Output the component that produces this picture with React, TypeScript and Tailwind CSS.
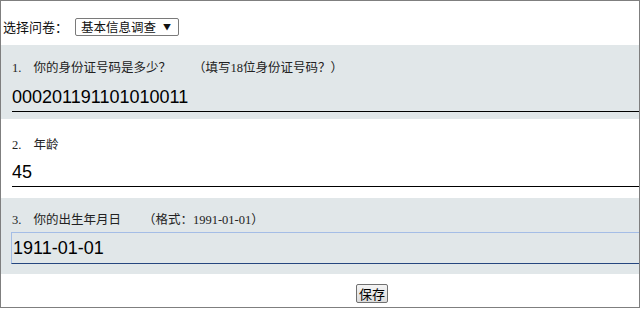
const label = "font-['Liberation_Serif','Noto_Sans_CJK_SC',serif] text-[12.5px] leading-[18px] text-[#222]";
const field =
  "block w-[640px] bg-transparent px-0 font-['Liberation_Sans',Arial,sans-serif] text-[18px] text-black outline-none";

export default function App() {
  return (
    <div className="w-[640px] h-[308px] overflow-hidden border border-[#7f7f7f] bg-white">
      <div className="flex items-center h-[44px] pt-[8px] pl-[2px] font-['Noto_Sans_CJK_SC',sans-serif] text-[#111]">
        <span className="text-[13px]">选择问卷：</span>
        <div className="ml-[7px] flex items-center h-[18px] w-[104px] border border-[#7a7a7a] rounded-[2px] pl-[5px] text-[12.5px] leading-none">
          <span>基本信息调查</span>
          <span className="ml-[7px] text-[8px]">▼</span>
        </div>
      </div>

      <div className="h-[74px] bg-[#e1e7e9] pt-[14px] pl-[11px]">
        <p className={label}>
          <span>1.</span>
          <span className="ml-[12px]">你的身份证号码是多少？</span>
          <span className="ml-[22px]">（填写18位身份证号码？）</span>
        </p>
        <input
          readOnly
          value="000201191101010011"
          className={`${field} mt-[7px] h-[28px] border-b border-black`}
        />
      </div>

      <div className="h-[79px] pt-[17px] pl-[11px]">
        <p className={label}>
          <span>2.</span>
          <span className="ml-[12px]">年龄</span>
        </p>
        <input readOnly value="45" className={`${field} mt-[5px] h-[28px] border-b border-black`} />
      </div>

      <div className="h-[76px] bg-[#e1e7e9] pt-[13px] pl-[11px]">
        <p className={label}>
          <span>3.</span>
          <span className="ml-[12px]">你的出生年月日</span>
          <span className="ml-[22px]">（格式：1991-01-01）</span>
        </p>
        <input
          readOnly
          value="1911-01-01"
          className={`${field} -ml-px mt-[3px] h-[32px] border border-[#a4bde6] border-b-[#25467f] pl-px`}
        />
      </div>

      <div className="pt-[7px] pl-[355px]">
        <button className="h-[19px] border border-[#707070] rounded-[2px] bg-gradient-to-b from-[#f4f4f4] to-[#dcdcdc] px-[2px] font-['Noto_Sans_CJK_SC',sans-serif] text-[13px] leading-none text-black">
          保存
        </button>
      </div>
    </div>
  );
}
